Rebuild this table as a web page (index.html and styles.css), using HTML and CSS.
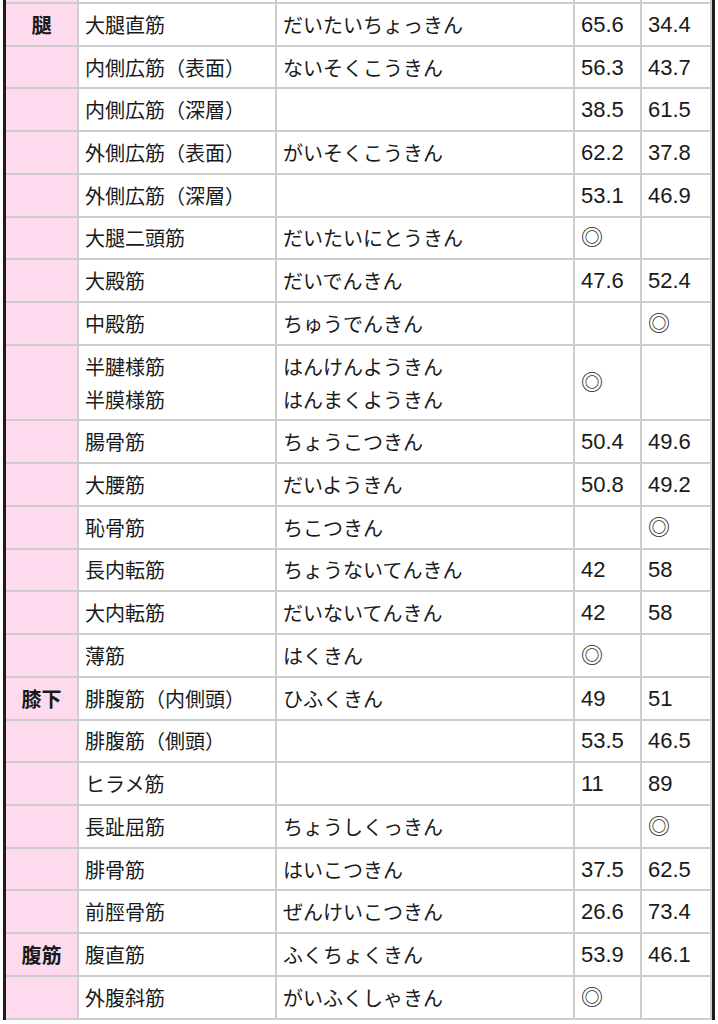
FILE: index.html
```html
<!DOCTYPE html>
<html lang="ja">
<head>
<meta charset="utf-8">
<title>筋肉一覧</title>
<link rel="stylesheet" href="styles.css">
</head>
<body>
<div class="frame">
<table class="muscles">
<colgroup>
<col class="c-cat"><col class="c-name"><col class="c-read"><col class="c-n1"><col class="c-n2">
</colgroup>
<tbody>
<tr class="cut"><td class="cat"></td><td></td><td></td><td></td><td></td></tr>
<tr><td class="cat">腿</td><td>大腿直筋</td><td>だいたいちょっきん</td><td class="num">65.6</td><td class="num">34.4</td></tr>
<tr><td class="cat"></td><td>内側広筋（表面）</td><td>ないそくこうきん</td><td class="num">56.3</td><td class="num">43.7</td></tr>
<tr><td class="cat"></td><td>内側広筋（深層）</td><td></td><td class="num">38.5</td><td class="num">61.5</td></tr>
<tr><td class="cat"></td><td>外側広筋（表面）</td><td>がいそくこうきん</td><td class="num">62.2</td><td class="num">37.8</td></tr>
<tr><td class="cat"></td><td>外側広筋（深層）</td><td></td><td class="num">53.1</td><td class="num">46.9</td></tr>
<tr><td class="cat"></td><td>大腿二頭筋</td><td>だいたいにとうきん</td><td class="num">◎</td><td class="num"></td></tr>
<tr><td class="cat"></td><td>大殿筋</td><td>だいでんきん</td><td class="num">47.6</td><td class="num">52.4</td></tr>
<tr><td class="cat"></td><td>中殿筋</td><td>ちゅうでんきん</td><td class="num"></td><td class="num">◎</td></tr>
<tr><td class="cat"></td><td>半腱様筋<br>半膜様筋</td><td>はんけんようきん<br>はんまくようきん</td><td class="num">◎</td><td class="num"></td></tr>
<tr><td class="cat"></td><td>腸骨筋</td><td>ちょうこつきん</td><td class="num">50.4</td><td class="num">49.6</td></tr>
<tr><td class="cat"></td><td>大腰筋</td><td>だいようきん</td><td class="num">50.8</td><td class="num">49.2</td></tr>
<tr><td class="cat"></td><td>恥骨筋</td><td>ちこつきん</td><td class="num"></td><td class="num">◎</td></tr>
<tr><td class="cat"></td><td>長内転筋</td><td>ちょうないてんきん</td><td class="num">42</td><td class="num">58</td></tr>
<tr><td class="cat"></td><td>大内転筋</td><td>だいないてんきん</td><td class="num">42</td><td class="num">58</td></tr>
<tr><td class="cat"></td><td>薄筋</td><td>はくきん</td><td class="num">◎</td><td class="num"></td></tr>
<tr><td class="cat">膝下</td><td>腓腹筋（内側頭）</td><td>ひふくきん</td><td class="num">49</td><td class="num">51</td></tr>
<tr><td class="cat"></td><td>腓腹筋（側頭）</td><td></td><td class="num">53.5</td><td class="num">46.5</td></tr>
<tr><td class="cat"></td><td>ヒラメ筋</td><td></td><td class="num">11</td><td class="num">89</td></tr>
<tr><td class="cat"></td><td>長趾屈筋</td><td>ちょうしくっきん</td><td class="num"></td><td class="num">◎</td></tr>
<tr><td class="cat"></td><td>腓骨筋</td><td>はいこつきん</td><td class="num">37.5</td><td class="num">62.5</td></tr>
<tr><td class="cat"></td><td>前脛骨筋</td><td>ぜんけいこつきん</td><td class="num">26.6</td><td class="num">73.4</td></tr>
<tr><td class="cat">腹筋</td><td>腹直筋</td><td>ふくちょくきん</td><td class="num">53.9</td><td class="num">46.1</td></tr>
<tr><td class="cat"></td><td>外腹斜筋</td><td>がいふくしゃきん</td><td class="num">◎</td><td class="num"></td></tr>
</tbody>
</table>
</div>
</body>
</html>
```
FILE: styles.css
```css
html, body {
  margin: 0;
  padding: 0;
  background: #ffffff;
}

body {
  font-family: "Noto Sans CJK JP", "Noto Sans", sans-serif;
  color: #1a1a1a;
}

.frame {
  box-sizing: border-box;
  width: 712px;
  margin-left: 3px;
  border-left: 3px solid #1c1c1c;
  border-right: 3px solid #1c1c1c;
}

.muscles {
  width: 706px;
  table-layout: fixed;
  border-collapse: separate;
  border-spacing: 0;
  font-size: 20px;
}

.c-cat { width: 73px; }
.c-name { width: 198px; }
.c-read { width: 298px; }
.c-n1 { width: 67px; }
.c-n2 { width: 70px; }

.muscles td {
  padding: 3.86px 6px;
  line-height: 33px;
  border-right: 2px solid #cdcdcd;
  border-bottom: 2px solid #cdcdcd;
  vertical-align: middle;
  text-align: left;
  white-space: nowrap;
  overflow: hidden;
}

.muscles tr.cut td {
  padding: 2px 0 0 0;
  line-height: 0;
  font-size: 0;
}

.muscles td.cat {
  background: #fddaee;
  font-weight: 700;
  text-align: center;
  padding-left: 2px;
  padding-right: 2px;
}

.muscles td.num {
  font-family: "Liberation Sans", "Noto Sans CJK JP", sans-serif;
  font-size: 22px;
}
```
